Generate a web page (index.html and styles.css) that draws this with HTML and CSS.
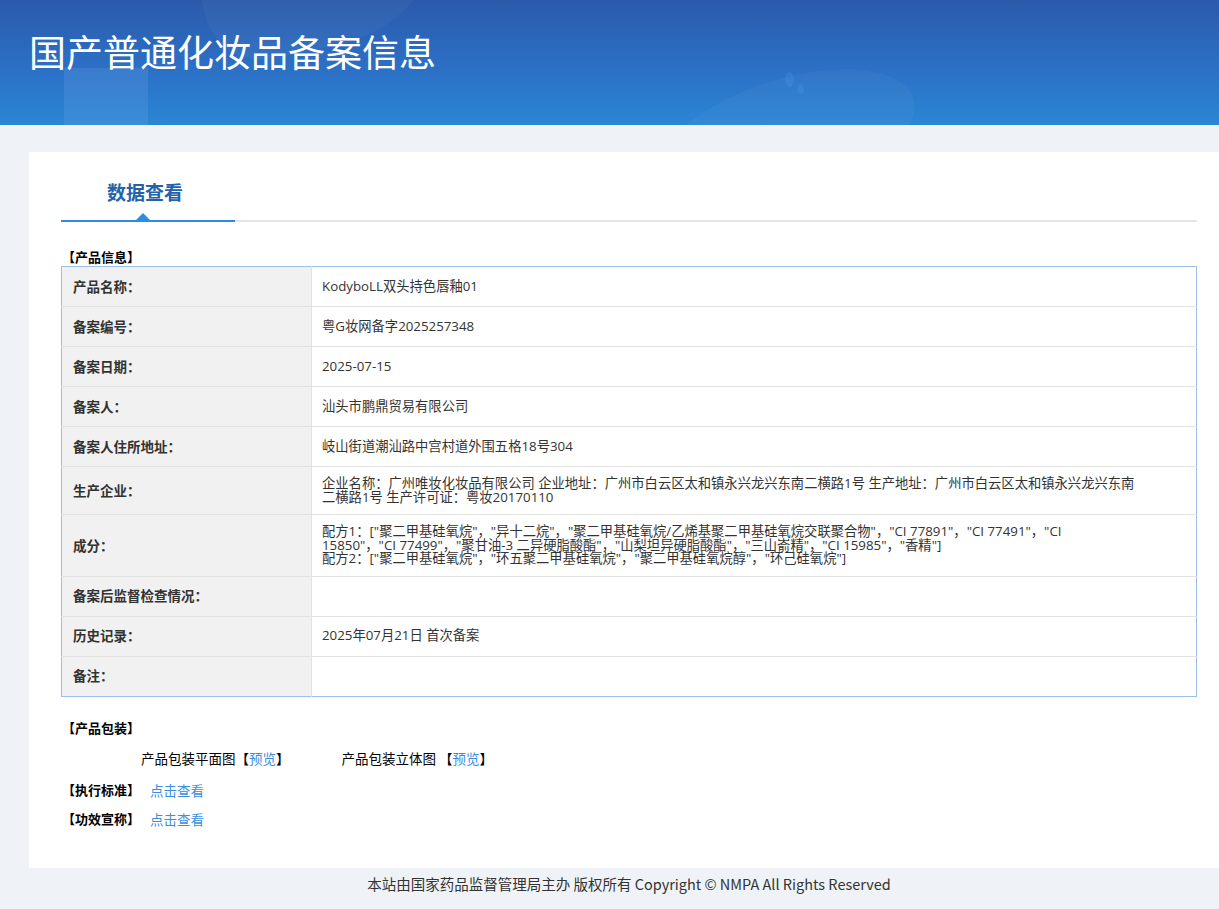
FILE: index.html
```html
<!DOCTYPE html>
<html lang="zh-CN">
<head>
    <meta charset="UTF-8">
    <meta name="viewport" content="width=device-width, initial-scale=1.0">
    <title>国产普通化妆品备案信息</title>
    <link rel="stylesheet" href="styles.css">
</head>
<body>
    <header class="banner">
        <span class="blob blob-a"></span>
        <span class="blob blob-b"></span>
        <span class="blob blob-c"></span>
        <span class="dot dot-a"></span>
        <span class="dot dot-b"></span>
        <h1>国产普通化妆品备案信息</h1>
    </header>

    <main class="card">
        <div class="tabs">
            <div class="tab active">数据查看</div>
        </div>

        <h3 class="sec-title">【产品信息】</h3>
        <table class="info">
            <tr>
                <td class="label">产品名称：</td>
                <td>KodyboLL双头持色唇釉01</td>
            </tr>
            <tr>
                <td class="label">备案编号：</td>
                <td>粤G妆网备字2025257348</td>
            </tr>
            <tr>
                <td class="label">备案日期：</td>
                <td>2025-07-15</td>
            </tr>
            <tr>
                <td class="label">备案人：</td>
                <td>汕头市鹏鼎贸易有限公司</td>
            </tr>
            <tr>
                <td class="label">备案人住所地址：</td>
                <td>岐山街道潮汕路中宫村道外围五格18号304</td>
            </tr>
            <tr class="multi">
                <td class="label">生产企业：</td>
                <td>企业名称：广州唯妆化妆品有限公司 企业地址：广州市白云区太和镇永兴龙兴东南二横路1号 生产地址：广州市白云区太和镇永兴龙兴东南<br>二横路1号 生产许可证：粤妆20170110</td>
            </tr>
            <tr class="multi">
                <td class="label">成分：</td>
                <td>配方1：["聚二甲基硅氧烷"，"异十二烷"，"聚二甲基硅氧烷/乙烯基聚二甲基硅氧烷交联聚合物"，"CI 77891"，"CI 77491"，"CI<br>15850"，"CI 77499"，"聚甘油-3 二异硬脂酸酯"，"山梨坦异硬脂酸酯"，"三山嵛精"，"CI 15985"，"香精"]<br>配方2：["聚二甲基硅氧烷"，"环五聚二甲基硅氧烷"，"聚二甲基硅氧烷醇"，"环己硅氧烷"]</td>
            </tr>
            <tr>
                <td class="label">备案后监督检查情况：</td>
                <td></td>
            </tr>
            <tr>
                <td class="label">历史记录：</td>
                <td>2025年07月21日 首次备案</td>
            </tr>
            <tr>
                <td class="label">备注：</td>
                <td></td>
            </tr>
        </table>

        <h3 class="sec-title pack-title">【产品包装】</h3>
        <div class="pack">
            <span>产品包装平面图【<a href="#">预览</a>】</span>
            <span>产品包装立体图 【<a href="#">预览</a>】</span>
        </div>

        <div class="line-item">
            <b>【执行标准】</b>
            <a href="#">点击查看</a>
        </div>
        <div class="line-item">
            <b>【功效宣称】</b>
            <a href="#">点击查看</a>
        </div>
    </main>

    <footer class="foot">本站由国家药品监督管理局主办 版权所有 Copyright © NMPA All Rights Reserved</footer>
</body>
</html>
```

FILE: styles.css
```css
* {
    margin: 0;
    padding: 0;
    box-sizing: border-box;
}

html, body {
    overflow-x: hidden;
}

body {
    background-color: #eff3f7;
    font-family: "Open Sans", "Noto Sans CJK SC", sans-serif;
    font-size: 13px;
    color: #333;
}

a {
    color: #3a8ee0;
    text-decoration: none;
}

/* banner */
.banner {
    position: relative;
    height: 125px;
    overflow: hidden;
    background: linear-gradient(180deg, #2b5aab 0%, #2c70c6 55%, #2a86d4 100%);
}

.banner h1 {
    position: relative;
    padding: 27px 0 0 29px;
    font-family: "Noto Sans CJK SC", sans-serif;
    font-size: 37px;
    font-weight: 400;
    line-height: 48px;
    color: #fff;
}

.blob {
    position: absolute;
    border-radius: 50%;
    background: rgba(255, 255, 255, 0.035);
}

.blob-a {
    left: 200px;
    top: -90px;
    width: 260px;
    height: 135px;
    border-radius: 0 0 140px 60px;
    transform: rotate(-12deg);
}

.blob-b {
    left: 64px;
    top: 68px;
    width: 84px;
    height: 70px;
    border-radius: 0;
    background: rgba(120, 170, 240, 0.2);
}

.blob-c {
    left: 650px;
    top: 80px;
    width: 270px;
    height: 120px;
    transform: rotate(-18deg);
}

.dot {
    position: absolute;
    border-radius: 50%;
    background: rgba(70, 150, 235, 0.3);
}

.dot-a {
    left: 785px;
    top: 72px;
    width: 9px;
    height: 15px;
}

.dot-b {
    left: 797px;
    top: 84px;
    width: 7px;
    height: 10px;
}

/* card */
.card {
    width: 1200px;
    margin: 27px 0 0 29px;
    padding: 0 32px 43px;
    background: #fff;
}

.tabs {
    display: flex;
    border-bottom: 2px solid #e6e6e6;
}

.tab {
    position: relative;
    width: 174px;
    margin-bottom: -2px;
    padding: 26px 6px 14px 0;
    text-align: center;
    font-family: "Noto Sans CJK SC", sans-serif;
    font-size: 19px;
    font-weight: 700;
    line-height: 28px;
    color: #2262aa;
    border-bottom: 2px solid #2b8ce0;
}

.tab.active::after {
    content: "";
    position: absolute;
    left: 75px;
    bottom: 0;
    border-left: 7px solid transparent;
    border-right: 7px solid transparent;
    border-bottom: 7px solid #2b8ce0;
}

.sec-title {
    margin-top: 26px;
    padding-left: 1px;
    font-family: "Noto Sans CJK SC", sans-serif;
    font-size: 13px;
    font-weight: 700;
    line-height: 18px;
    color: #000;
}

/* table */
.info {
    width: 100%;
    border-collapse: collapse;
    border: 1px solid #9dbfea;
    font-family: "Open Sans", "Noto Sans CJK SC", sans-serif;
    font-size: 13.3px;
}

.info td {
    height: 40px;
    padding: 0 10px;
    border: 1px solid #e2e2e2;
    line-height: 13.5px;
    vertical-align: middle;
    color: #333;
}

.info td.label {
    width: 250px;
    padding-left: 11px;
    background: #f1f1f1;
    font-family: "Noto Sans CJK SC", sans-serif;
    font-size: 13.5px;
    font-weight: 700;
}

.info tr.multi td {
    padding-top: 10px;
    padding-bottom: 10px;
}

.info tr:first-child td {
    border-top: none;
}

.info tr:last-child td {
    border-bottom: none;
}

.info td:first-child {
    border-left: none;
}

.info td:last-child {
    border-right: none;
}

/* packaging */
.pack-title {
    margin-top: 22px;
}

.pack {
    display: flex;
    gap: 52px;
    padding: 12px 0 0 80px;
    font-family: "Noto Sans CJK SC", sans-serif;
    font-size: 13.5px;
    line-height: 18px;
    color: #000;
}

.line-item {
    display: flex;
    gap: 10px;
    margin-top: 17px;
    padding-left: 1px;
    font-family: "Noto Sans CJK SC", sans-serif;
    font-size: 13.5px;
    line-height: 12px;
    color: #000;
}

.line-item b {
    font-size: 13px;
}

.foot {
    width: 1258px;
    padding: 6px 0 14px;
    text-align: center;
    font-family: "Noto Sans CJK SC", sans-serif;
    font-size: 14.5px;
    line-height: 20px;
    color: #333;
}
```
